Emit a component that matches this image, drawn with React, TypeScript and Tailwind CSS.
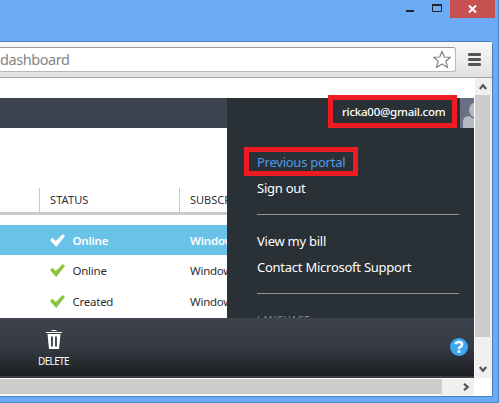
import React from "react";

const Check = ({ color }: { color: string }) => (
  <svg width="15" height="13" viewBox="0 0 15 13" className="ml-[50px] shrink-0">
    <path d="M0 6 L2.4 3.8 L5.8 7 L12.8 0 L15 2 L6.2 13 Z" fill={color} />
  </svg>
);

type RowProps = { status: string; selected?: boolean };

const Row = ({ status, selected }: RowProps) => (
  <div
    className={`flex h-[31px] items-center text-[11.5px] leading-none ${
      selected ? "font-semibold tracking-[-0.2px] text-white" : "tracking-[-0.25px] text-[#302f35]"
    }`}
  >
    <Check color={selected ? "#ffffff" : "#8ac43f"} />
    <span className="ml-[7.5px] w-[117.5px] shrink-0">{status}</span>
    <span>Windows</span>
  </div>
);

const TitleBar = () => (
  <div className="flex h-[41px] shrink-0 justify-end">
    <svg width="44" height="18" className="shrink-0">
      <path d="M0 11h8" stroke="#242424" strokeWidth="2" />
      <path d="M26.5 5h9v6.5h-9z" fill="none" stroke="#242424" />
      <path d="M26 5h10" stroke="#242424" strokeWidth="2" />
    </svg>
    <div className="mr-[3px] flex h-[18px] w-[45px] items-center justify-center bg-[#c75050]">
      <svg width="9" height="8" viewBox="0 0 9 8">
        <path d="M1 0.5l7 7M8 0.5l-7 7" stroke="#fff" strokeWidth="2" />
      </svg>
    </div>
  </div>
);

const Toolbar = () => (
  <div className="flex h-[36px] shrink-0 border-b border-[#a5a5a5] bg-linear-to-b from-[#f8f8f8] to-[#e1e1e1]">
    <div className="mt-[5px] flex h-[25px] w-[456px] items-center justify-between rounded-r-[3px] border border-l-0 border-[#b8b8b8] border-t-[#999] bg-white pr-[3px]">
      <span className="text-[14.5px] leading-none tracking-[-0.45px] text-[#858585]">dashboard</span>
      <svg width="20" height="19" viewBox="0 0 20 19">
        <path
          d="M10 1.2 L12.3 7 L18.4 7.3 L13.8 11.2 L15.6 17.4 L10 14 L4.4 17.4 L6.2 11.2 L1.6 7.3 L7.7 7 Z"
          fill="#fff"
          stroke="#828282"
          strokeWidth="1.2"
          strokeLinejoin="round"
        />
      </svg>
    </div>
    <svg width="13" height="14" className="mt-[11px] ml-[12px]">
      <path d="M1.3 1.5h10.4M1.3 6.5h10.4M1.3 11.5h10.4" stroke="#555" strokeWidth="2.8" strokeLinecap="round" />
    </svg>
  </div>
);

const DataTable = () => (
  <div className="flex w-[227px] shrink-0 flex-col overflow-hidden whitespace-nowrap bg-white">
    <div className="h-[30px] shrink-0 bg-[#3e444f]" />
    <div className="mt-[60px] flex h-[27px] shrink-0 border-b-3 border-[#c9c9c9] pl-[39px] text-[11px] leading-[24px] text-[#302f35]">
      <div className="w-[140px] shrink-0 border-l border-[#c9c9c9] pl-[10px] tracking-[0.1px]">STATUS</div>
      <div className="border-l border-[#c9c9c9] pl-[10px]">SUBSCRIPTION</div>
    </div>
    <div className="mt-[10px] h-[30px] shrink-0 bg-[#69c2e8]">
      <Row status="Online" selected />
    </div>
    <Row status="Online" />
    <Row status="Created" />
  </div>
);

const AccountMenu = () => (
  <div className="flex w-[247px] shrink-0 flex-col bg-[#293036] text-[13px] leading-[20px] tracking-[-0.25px] whitespace-nowrap text-white">
    <div className="flex h-[30px] shrink-0">
      <div className="-mt-[3px] ml-[101px] flex h-[33px] w-[129px] items-center border-5 border-[#ed1c24] pl-[9px] text-[11.5px] font-medium">
        ricka00@gmail.com
      </div>
      <svg width="14" height="30" className="ml-[3px]">
        <rect width="14" height="30" fill="#667185" />
        <ellipse cx="16" cy="12" rx="7" ry="7.5" fill="#b3b9bf" />
        <path d="M3 30V24Q3 18 9 18L14 20V30Z" fill="#b3b9bf" />
        <path d="M9.5 17.5Q12 20 14 20" fill="none" stroke="#667185" />
      </svg>
    </div>
    <div className="mt-[19px] ml-[17px] flex h-[29px] w-[114px] shrink-0 items-center border-5 border-[#ed1c24] pl-[8px] text-[#4c9be8]">
      Previous portal
    </div>
    <div className="mt-[2px] ml-[30px]">Sign out</div>
    <div className="mt-[16px] ml-[30px] h-px w-[202px] shrink-0 bg-[#929799]" />
    <div className="mt-[16px] ml-[30px]">View my bill</div>
    <div className="mt-[6px] ml-[30px]">Contact Microsoft Support</div>
    <div className="mt-[16px] ml-[30px] h-px w-[202px] shrink-0 bg-[#929799]" />
    <div className="mt-[22px] ml-[30px] h-[2px] shrink-0 overflow-hidden text-[10px] leading-[9px] tracking-[0] text-[#858b8f]">
      LANGUAGE
    </div>
  </div>
);

const Footer = () => (
  <div className="flex h-[60px] shrink-0 justify-between border-b-2 border-[#383b44] bg-linear-to-b from-[#3e444f] via-[#353a43] to-[#1c1f22]">
    <div className="ml-[37px] flex w-[33px] flex-col items-center pt-[12px]">
      <svg width="16" height="19" viewBox="0 0 16 19">
        <path d="M5.5 .5h5M0 2.5h16" stroke="#fff" />
        <path d="M1.5 4h13L13 19H3z" fill="#fff" />
        <path d="M6 6.5v10M10 6.5v10" stroke="#343a44" strokeWidth="1.8" />
      </svg>
      <span className="mt-[6px] text-[10px] leading-[12px] tracking-[-0.65px] text-white">DELETE</span>
    </div>
    <svg width="18" height="18" viewBox="0 0 18 18" className="mt-[20px] mr-[6px]">
      <circle cx="9" cy="9" r="9" fill="#3ba7f5" />
      <path d="M5.6 6.2Q6 4.1 9 4.1Q12.1 4.1 12.1 6.4Q12.1 8 10.2 8.9Q9 9.5 9 11" fill="none" stroke="#fff" strokeWidth="2.5" />
      <rect x="7.6" y="12.2" width="2.7" height="2.7" fill="#fff" />
    </svg>
  </div>
);

const VerticalScrollbar = () => (
  <div className="flex w-[18px] shrink-0 flex-col border-l border-white bg-[#f0f0f0]">
    <div className="flex h-[17px] items-center justify-center pr-[2px]">
      <svg width="8" height="7">
        <path d="M.8 6L4 2.3L7.2 6" fill="none" stroke="#565656" strokeWidth="2.2" />
      </svg>
    </div>
    <div className="h-[242px] w-[15px] bg-[#cdcdcd]" />
    <div className="mt-[29px] flex justify-center pr-[2px]">
      <svg width="8" height="7">
        <path d="M.8 1L4 4.7L7.2 1" fill="none" stroke="#565656" strokeWidth="2.2" />
      </svg>
    </div>
  </div>
);

const HorizontalScrollbar = () => (
  <div className="flex h-[17px] shrink-0 bg-white">
    <div className="flex w-[474px] border-t border-white bg-[#f0f0f0]">
      <div className="h-[15px] w-[442px] bg-[#cdcdcd]" />
      <svg width="7" height="8" className="mt-[4px] ml-[21px]">
        <path d="M1 .8L4.7 4L1 7.2" fill="none" stroke="#565656" strokeWidth="2.2" />
      </svg>
    </div>
  </div>
);

export default function App() {
  return (
    <div className="flex h-[403px] w-[499px] flex-col overflow-hidden border-r border-b border-[#4b86c8] bg-[#6babf4] font-['Noto_Sans','Open_Sans',sans-serif]">
      <TitleBar />
      <div className="flex h-[356px] w-[493px] shrink-0 flex-col rounded-tr-[4px] border-t border-r border-b border-[#447fbe] bg-white">
        <Toolbar />
        <div className="flex h-[300px] shrink-0">
          <div className="flex w-[474px] shrink-0 flex-col">
            <div className="mt-[20px] flex h-[220px] shrink-0">
              <DataTable />
              <AccountMenu />
            </div>
            <Footer />
          </div>
          <VerticalScrollbar />
        </div>
        <HorizontalScrollbar />
      </div>
    </div>
  );
}
